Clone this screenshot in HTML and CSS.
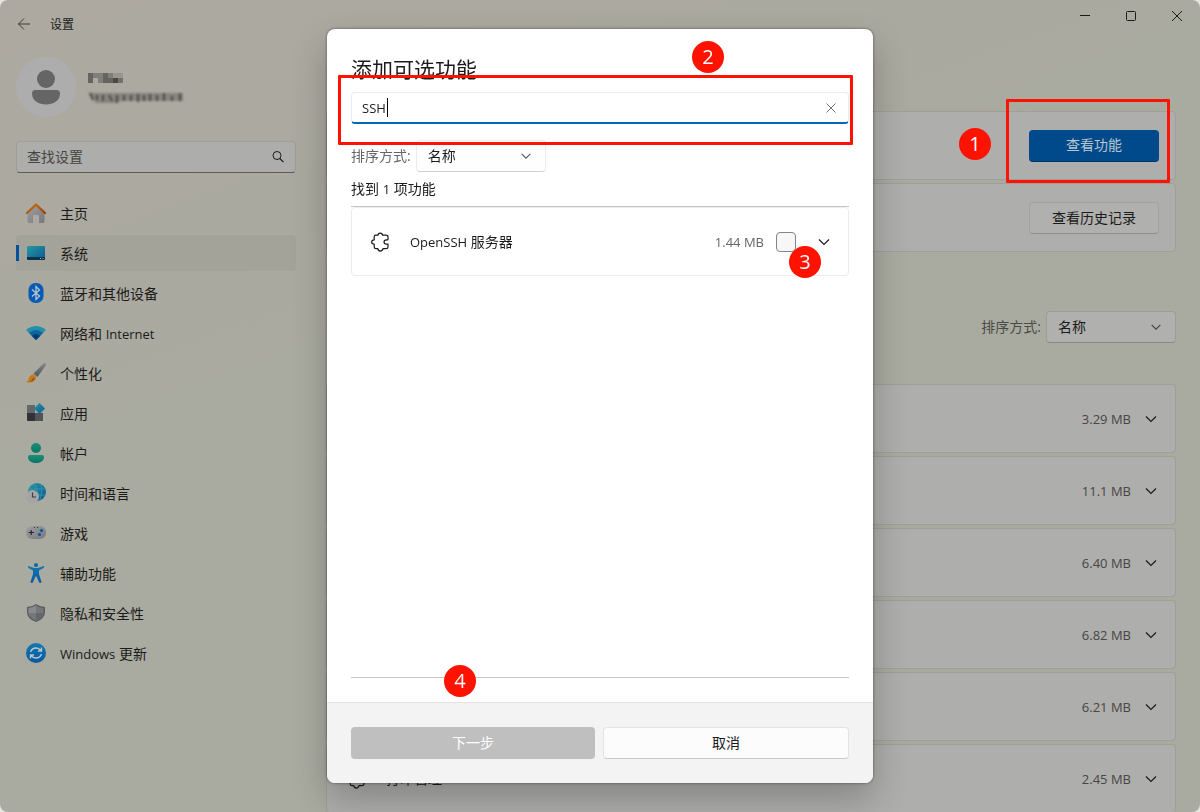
FILE: index.html
```html
<!DOCTYPE html>
<html lang="zh-CN">
<head>
<meta charset="utf-8">
<title>设置</title>
<link rel="stylesheet" href="styles.css">
</head>
<body>
<svg class="defs" aria-hidden="true">
  <defs>
    <linearGradient id="g-roof" x1="0" y1="0" x2="1" y2="1"><stop offset="0" stop-color="#c07a12"/><stop offset="1" stop-color="#a83a08"/></linearGradient>
    <linearGradient id="g-gray" x1="0" y1="0" x2="1" y2="1"><stop offset="0" stop-color="#a0a0a4"/><stop offset="1" stop-color="#77777c"/></linearGradient>
    <linearGradient id="g-teal" x1="0" y1="0" x2="1" y2="1"><stop offset="0" stop-color="#279a9e"/><stop offset="1" stop-color="#0b5796"/></linearGradient>
    <linearGradient id="g-green" x1="0" y1="0" x2="0" y2="1"><stop offset="0" stop-color="#199078"/><stop offset="1" stop-color="#0b7466"/></linearGradient>
    <linearGradient id="g-blue" x1="0" y1="0" x2="0" y2="1"><stop offset="0" stop-color="#1378ae"/><stop offset="1" stop-color="#0758a0"/></linearGradient>
    <linearGradient id="g-steel" x1="0" y1="0" x2="0" y2="1"><stop offset="0" stop-color="#85888d"/><stop offset="1" stop-color="#505358"/></linearGradient>
    <symbol id="chevron" viewBox="0 0 16 16"><path d="M3 5.500l5 5 5-5" fill="none" stroke="currentColor" stroke-width="1.200"/></symbol>
    <symbol id="puzzle" viewBox="0 0 20 20"><path d="M5.500 3.200H8C8 .3 12.500 .3 12.500 3.200H16Q18 3.200 18 5V7.800H16.500C13.200 8 13.200 12 16.500 12.200H18V15Q18 16.700 16 16.700H13C12.500 19.800 8.200 19.800 7.800 16.700H6Q4.200 16.700 4.200 15V12.200C.8 12 .8 8 4.200 7.800V5Q4.200 3.200 5.500 3.200Z" fill="none" stroke="currentColor" stroke-width="1.200" stroke-linejoin="round"/></symbol>
  </defs>
</svg>

<div class="window">
  <header class="titlebar">
    <button class="back" aria-label="返回"><svg width="14" height="14" viewBox="0 0 14 14"><path d="M13 7H1.500M7 1.500L1.500 7L7 12.500" fill="none" stroke="currentColor"/></svg></button>
    <span class="app-name">设置</span>
    <div class="controls">
      <button aria-label="最小化"><svg width="10" height="10" viewBox="0 0 10 10"><path d="M0 4.500H10" stroke="currentColor"/></svg></button>
      <button aria-label="最大化"><svg width="10" height="10" viewBox="0 0 10 10"><rect x=".5" y=".5" width="9" height="9" rx="1" fill="none" stroke="currentColor"/></svg></button>
      <button aria-label="关闭"><svg width="10" height="10" viewBox="0 0 10 10"><path d="M0 0L10 10M10 0L0 10" stroke="currentColor"/></svg></button>
    </div>
  </header>

  <div class="columns">
    <aside class="sidebar">
      <div class="profile">
        <svg class="avatar" viewBox="0 0 60 60" aria-hidden="true"><circle cx="30" cy="30" r="30" fill="#adadae"/><circle cx="30" cy="22" r="9" fill="#656565"/><path d="M19 33H41Q44 33 44 36.500C44 44 37 47.500 30 47.500S16 44 16 36.500Q16 33 19 33Z" fill="#656565"/></svg>
        <div class="account">
          <svg class="masked-name" viewBox="0 0 35 11" aria-hidden="true">
            <path d="M0 0h5v5H0zM15 0h5v5h-5zM15 5h5v5h-5zM0 5h5v5H0zM20 5h5v5h-5z" fill="#66645f"/>
            <path d="M5 0h10v5H5zM20 0h5v5h-5zM10 5h5v5h-5z" fill="#807e78"/>
            <path d="M25 0h10v5H25z" fill="#98958d"/><path d="M25 5h5v5h-5z" fill="#494843"/><path d="M30 5h5v5h-5z" fill="#74716b"/>
          </svg>
          <svg class="masked-mail" viewBox="0 0 96 14" aria-hidden="true"><path d="M1 3h94v8H34l-6 2H8z" fill="#77756f" opacity=".7"/><path d="M2 3l3 7M9 5v5M15 5v6M21 5l3 6M29 5v8M36 5v6M43 5v6M50 4v8M56 5v6M62 4v7M69 5v6M76 3v8M84 6v5M92 3v8" fill="none" stroke="#4b4a45" stroke-width="2"/></svg>
        </div>
      </div>

      <div class="side-search">
        <input type="search" placeholder="查找设置" aria-label="查找设置">
        <svg width="12" height="12" viewBox="0 0 12 12" aria-hidden="true"><circle cx="5" cy="4.500" r="4" fill="none" stroke="currentColor"/><path d="M7.800 7.500L11.500 11.200" stroke="currentColor" stroke-width="1.200"/></svg>
      </div>

      <nav class="nav">
        <a href="#"><svg viewBox="0 0 20 20"><path d="M1.500 9L10 2L18.500 9V18.500Q18.500 20 17 20H13V13Q13 12 12 12H8Q7 12 7 13V20H3Q1.500 20 1.500 18.500Z" fill="url(#g-gray)"/><path d="M1 10L10 1.500L19 10" fill="none" stroke="url(#g-roof)" stroke-width="2.400" stroke-linecap="round" stroke-linejoin="round"/></svg><span>主页</span></a>
        <a href="#" class="active" aria-current="page"><svg viewBox="0 0 20 20"><rect x="1" y="3" width="18" height="14" rx="1" fill="url(#g-teal)"/><path d="M1 14H19V16Q19 17 18 17H2Q1 17 1 16Z" fill="#09344c"/><path d="M14 15.500h1M16.500 15.500h1" stroke="#a9b8bc"/></svg><span>系统</span></a>
        <a href="#"><svg viewBox="0 0 20 20"><rect x="2.500" width="15" height="20" rx="7" fill="#075bb5"/><path d="M6 6.500L13.500 13L10 16.500V3.500L13.500 7L6 13.500" fill="none" stroke="#b9c5d1" stroke-width="1.300"/></svg><span>蓝牙和其他设备</span></a>
        <a href="#"><svg viewBox="0 0 20 20"><path d="M0 7Q10-1 20 7L10 17Z" fill="#278eaa"/><path d="M3 10Q10 4 17 10L10 17Z" fill="#08679c"/><path d="M6 13Q10 9 14 13L10 17Z" fill="#063b73"/></svg><span>网络和 <span class="latin">Internet</span></span></a>
        <a href="#"><svg viewBox="0 0 20 20"><path d="M19.500.3Q20.500 1.200 19 3.500L11.500 14L7.500 10.500L16.500 1.500Q18.500-.2 19.500.3Z" fill="url(#g-steel)"/><path d="M7.500 11.500Q11 13 9.500 16.500Q6 21 0 19Q2.500 18 3 15Q4 11.500 7.500 11.500Z" fill="#c77717"/><path d="M9 15Q8 19 3 19Q6 18 7 15Z" fill="#a94e13"/></svg><span>个性化</span></a>
        <a href="#"><svg viewBox="0 0 20 20"><path d="M1 2h8v8H1z" fill="#64676d"/><path d="M1 10h8v8H2q-1 0-1-1z" fill="#303237"/><path d="M9 10h8v8H9z" fill="#50535a"/><path d="M13.500 0L19 5.500L13.500 11L8 5.500Z" fill="url(#g-teal)"/></svg><span>应用</span></a>
        <a href="#"><svg viewBox="0 0 20 20" fill="url(#g-green)"><circle cx="10" cy="5" r="5"/><path d="M4 12H16Q18 12 18 14C18 18 14 20 10 20S2 18 2 14Q2 12 4 12Z"/></svg><span>帐户</span></a>
        <a href="#"><svg viewBox="0 0 20 20"><circle cx="11" cy="9" r="9" fill="url(#g-teal)"/><path d="M3 6H19M8 1Q13 7 12 17M15 1Q17 8 14 17M10 12H19" fill="none" stroke="#3fa2b9" stroke-width=".6"/><circle cx="6.500" cy="13.500" r="6.500" fill="#a5a5a8"/><path d="M6.500 9.500V14H10" fill="none" stroke="#3f3f42" stroke-width="1.200"/></svg><span>时间和语言</span></a>
        <a href="#"><svg viewBox="0 0 20 20"><rect y="3" width="20" height="13" rx="6" fill="url(#g-gray)"/><path d="M2.500 9.500H8M5.250 7V12" stroke="#252629" stroke-width="1.200"/><circle cx="15.500" cy="7.500" r="1.600" fill="#0755a2"/><circle cx="13.500" cy="11.500" r="1.600" fill="#0755a2"/><path d="M8 4.500h1M11 4.500h1" stroke="#34373b"/></svg><span>游戏</span></a>
        <a href="#"><svg viewBox="0 0 20 20" fill="url(#g-blue)"><circle cx="10" cy="2" r="2"/><path d="M2.500 3L8 5H12L17.500 3Q19 3.500 17.500 5L13 7.500V11L15.500 19Q14 21 13 19L10.500 13.500H9.500L7 19Q6 21 4.500 19L7 11V7.500L2.500 5Q1.500 3.500 2.500 3Z"/></svg><span>辅助功能</span></a>
        <a href="#"><svg viewBox="0 0 20 20"><path d="M10 1Q14 4 19 4V9Q19 16 10 19Q1 16 1 9V4Q6 4 10 1Z" fill="#5a5e62"/><path d="M10 2.500Q14 5 17.500 5V9Q17.500 15 10 17.500Q2.500 15 2.500 9V5Q6 5 10 2.500Z" fill="#74787b"/><path d="M10 2.500V10H2.500V5Q6 5 10 2.500Z" fill="#888b8d"/><path d="M10 10h7.300Q16.500 15 10 17.500Z" fill="#62676b"/></svg><span>隐私和安全性</span></a>
        <a href="#"><svg viewBox="0 0 20 20"><circle cx="10" cy="10" r="10" fill="url(#g-blue)"/><path d="M4.500 9Q6 5 10 5Q13 5 15 7.500M15.500 11Q14 15 10 15Q7 15 5 12.500M15.500 4.500V8H12M4.500 15.500V12H8" fill="none" stroke="#b7c7d2" stroke-width="1.400"/></svg><span><span class="latin">Windows</span> 更新</span></a>
      </nav>
    </aside>

    <main class="main" aria-label="可选功能">
      <section class="actions">
        <div class="card">
          <div class="marked">
            <button class="btn btn-primary">查看功能</button>
            <span class="frame frame-view"></span>
            <span class="badge badge-1">1</span>
          </div>
        </div>
        <div class="card"><button class="btn btn-dim">查看历史记录</button></div>
      </section>

      <div class="sort sort-dim">
        <label for="sort-main">排序方式:</label>
        <div class="select"><select id="sort-main"><option>名称</option></select><svg width="14" height="14"><use href="#chevron"/></svg></div>
      </div>

      <section class="features">
        <div class="card"><span class="size">3.29 MB</span><svg class="chev"><use href="#chevron"/></svg></div>
        <div class="card"><span class="size">11.1 MB</span><svg class="chev"><use href="#chevron"/></svg></div>
        <div class="card"><span class="size">6.40 MB</span><svg class="chev"><use href="#chevron"/></svg></div>
        <div class="card"><span class="size">6.82 MB</span><svg class="chev"><use href="#chevron"/></svg></div>
        <div class="card"><span class="size">6.21 MB</span><svg class="chev"><use href="#chevron"/></svg></div>
        <div class="card"><svg class="puzzle"><use href="#puzzle"/></svg><span class="name">打印管理</span><span class="size">2.45 MB</span><svg class="chev"><use href="#chevron"/></svg></div>
      </section>
    </main>
  </div>
</div>

<div class="overlay">
  <div class="dialog" role="dialog" aria-labelledby="dialog-title">
    <div class="dialog-body">
      <h1 id="dialog-title">添加可选功能</h1>
      <div class="search">
        <input type="text" value="SSH" aria-label="查找可选功能">
        <span class="caret"></span>
        <button class="clear" aria-label="清除"><svg width="10" height="10" viewBox="0 0 10 10"><path d="M.5 .5L9.500 9.500M9.500 .5L.5 9.500" stroke="currentColor"/></svg></button>
        <span class="frame frame-search"></span>
        <span class="badge badge-2">2</span>
      </div>
      <div class="sort">
        <label for="sort-dialog">排序方式:</label>
        <div class="select"><select id="sort-dialog"><option>名称</option></select><svg width="14" height="14"><use href="#chevron"/></svg></div>
      </div>
      <p class="found">找到 <span class="latin">1</span> 项功能</p>
      <div class="results">
        <div class="result">
          <svg class="puzzle"><use href="#puzzle"/></svg>
          <label class="name" for="openssh"><span class="latin">OpenSSH</span> 服务器</label>
          <span class="size">1.44 MB</span>
          <input type="checkbox" id="openssh">
          <button class="expand" aria-label="展开"><svg class="chev"><use href="#chevron"/></svg></button>
          <span class="badge badge-3">3</span>
        </div>
      </div>
    </div>
    <footer class="dialog-footer">
      <button class="btn btn-next" disabled>下一步</button>
      <button class="btn btn-cancel">取消</button>
      <span class="badge badge-4">4</span>
    </footer>
  </div>
</div>
</body>
</html>
```
FILE: styles.css
```css
* { box-sizing: border-box; }

body {
  margin: 0;
  background: #e4e4e2;
  color: #1b1b1a;
  font: 14px/20px "Open Sans", "Noto Sans CJK SC", sans-serif;
}

button, input, select { font: inherit; color: inherit; }
button { padding: 0; border: 0; background: none; }
svg { display: block; flex: none; }
.defs { position: absolute; width: 0; height: 0; }
.latin, .size { font-size: 13px; }

/* Window */
.window {
  display: flex;
  flex-direction: column;
  height: 100vh;
  overflow: hidden;
  border-radius: 8px;
  background: linear-gradient(160deg, #ada9a1 0%, #aba9a0 18%, #a9aaa0 40%, #a9aaa0 100%);
}
.titlebar { display: flex; align-items: center; height: 48px; flex: none; padding-left: 17px; }
.back { color: #3c3b38; }
.app-name { margin-left: 19px; padding-top: 2px; font-size: 12px; }
.controls { display: flex; align-self: flex-start; margin-left: auto; }
.controls button { display: grid; place-items: center; width: 46px; height: 32px; }
.columns { display: flex; flex: 1; min-height: 0; gap: 30px; padding: 0 24px 0 16px; }

/* Sidebar */
.sidebar { width: 280px; flex: none; padding-top: 9px; }
.profile { display: flex; align-items: center; gap: 12px; margin-bottom: 24px; }
.avatar { width: 60px; height: 60px; }
.account { display: grid; gap: 6px; padding-top: 3px; }
.masked-name { width: 35px; height: 11px; }
.masked-mail { width: 96px; height: 14px; filter: blur(1px); }
.side-search {
  display: flex;
  align-items: center;
  height: 32px;
  margin-bottom: 22px;
  padding: 0 11px 0 10px;
  border: 1px solid #a09f95;
  border-bottom-color: #5c5c59;
  border-radius: 4px;
  background: #adadac;
}
.side-search input { flex: 1; min-width: 0; padding: 0; border: 0; outline: 0; background: none; }
.side-search input::placeholder { color: #454543; opacity: 1; }
.nav { display: grid; gap: 4px; }
.nav a {
  display: flex;
  align-items: center;
  gap: 14px;
  height: 36px;
  padding-left: 10px;
  border-radius: 4px;
  color: inherit;
  text-decoration: none;
}
.nav a > span { padding-top: 2px; }
.nav svg { width: 20px; height: 20px; }
.nav .active {
  background: linear-gradient(#05509a, #05509a) left center / 3px 16px no-repeat, #a3a39a;
}

/* Main column */
.main { flex: 1; min-width: 0; padding-top: 63px; }
.actions, .features { display: grid; gap: 3px; }
.card {
  display: flex;
  align-items: center;
  justify-content: flex-end;
  height: 69px;
  padding: 0 16px 0 19px;
  border: 1px solid #9f9f97;
  border-radius: 4px;
  background: #aeaeac;
}
.chev { width: 16px; height: 16px; }
.card .size { color: #464644; }
.card .chev { margin-left: 12px; }
.card .name { margin: 0 auto 0 20px; }
.puzzle { width: 20px; height: 20px; }
.marked { position: relative; }

.btn { height: 32px; border-radius: 4px; }
.btn-primary, .btn-dim { display: block; width: 130px; }
.btn-primary { background: #004a8c; border-bottom: 1px solid #003565; color: #b9c4cd; }
.btn-dim { border: 1px solid #a2a2a0; border-bottom-color: #8e8e8c; background: #b0b0af; }

.sort { display: flex; align-items: center; gap: 5px; color: #666; }
.sort-dim { justify-content: flex-end; margin: 59px 0 41px; color: #4a4a47; }
.select { display: grid; align-items: center; width: 130px; height: 32px; }
.select select, .select svg { grid-area: 1 / 1; }
.select select {
  width: 100%;
  height: 32px;
  padding: 0 32px 0 11px;
  border: 1px solid #ececec;
  border-bottom-color: #d2d2d2;
  border-radius: 4px;
  background: #fefefe;
  color: #1b1b1b;
  appearance: none;
}
.select svg { justify-self: end; margin-right: 13px; color: #555; pointer-events: none; }
.sort-dim select { border-color: #9d9d96; border-bottom-color: #888883; background: #b0b0ae; }
.sort-dim svg { color: #40403e; }

/* Dialog */
.overlay { position: fixed; inset: 0; display: flex; justify-content: center; padding: 29px 24px; }
.dialog {
  display: flex;
  flex-direction: column;
  width: 546px;
  border-radius: 8px;
  background: #fff;
  box-shadow: 0 16px 36px rgba(0, 0, 0, .24), 0 0 3px rgba(0, 0, 0, .5);
}
.dialog-body { display: flex; flex: 1; flex-direction: column; padding: 24px; }
h1 { margin: 0 0 7px; font-size: 21px; font-weight: 400; line-height: 32px; }
.search {
  position: relative;
  display: flex;
  align-items: center;
  height: 32px;
  margin-bottom: 16px;
  padding: 0 12px 0 10px;
  border: 1px solid #ececec;
  border-bottom: 2px solid #0067c0;
  border-radius: 4px;
}
.search input { width: 25px; padding: 0; border: 0; outline: 0; background: none; font-size: 13px; field-sizing: content; }
.caret { width: 1px; height: 19px; background: #000; }
.clear { margin-left: auto; color: #757575; }
.found { margin: 6px 0; line-height: 22px; }
.results { flex: 1; border: solid #c6c6c6; border-width: 1px 0; }
.result {
  position: relative;
  display: flex;
  align-items: center;
  height: 69px;
  padding: 0 16px 0 18px;
  border: 1px solid #ececec;
  border-radius: 4px;
}
.result .name { margin: 0 auto 0 20px; }
.result .size { color: #666; }
.result input {
  width: 20px;
  height: 20px;
  margin: 0 20px 0 12px;
  border: 1px solid #858585;
  border-radius: 4px;
  background: #f7f7f7;
  appearance: none;
}
.dialog-footer {
  position: relative;
  display: flex;
  gap: 8px;
  padding: 24px;
  border-top: 1px solid #e3e3e3;
  border-radius: 0 0 8px 8px;
  background: #f3f3f3;
}
.dialog-footer .btn { flex: 1 1 0; min-width: 0; }
.btn-next { background: #bfbfbf; color: #fff; }
.btn-cancel { border: 1px solid #e3e3e3; border-bottom-color: #cacaca; background: #fcfcfc; }

/* Step markers */
.frame { position: absolute; border: 3px solid #ff1200; border-radius: 1px; pointer-events: none; }
.frame-view { inset: -31px -11px -21px -23px; }
.frame-search { inset: -18px -5px -23px -14px; }
.badge {
  position: absolute;
  width: 32px;
  height: 32px;
  border-radius: 50%;
  background: #ff1200;
  color: #fff;
  font-size: 20px;
  line-height: 32px;
  text-align: center;
}
.badge-1 { top: -2px; left: -70px; }
.badge-2 { top: -52px; right: 124px; }
.badge-3 { top: 38px; right: 27px; }
.badge-4 { top: -38px; left: 117px; }
```
